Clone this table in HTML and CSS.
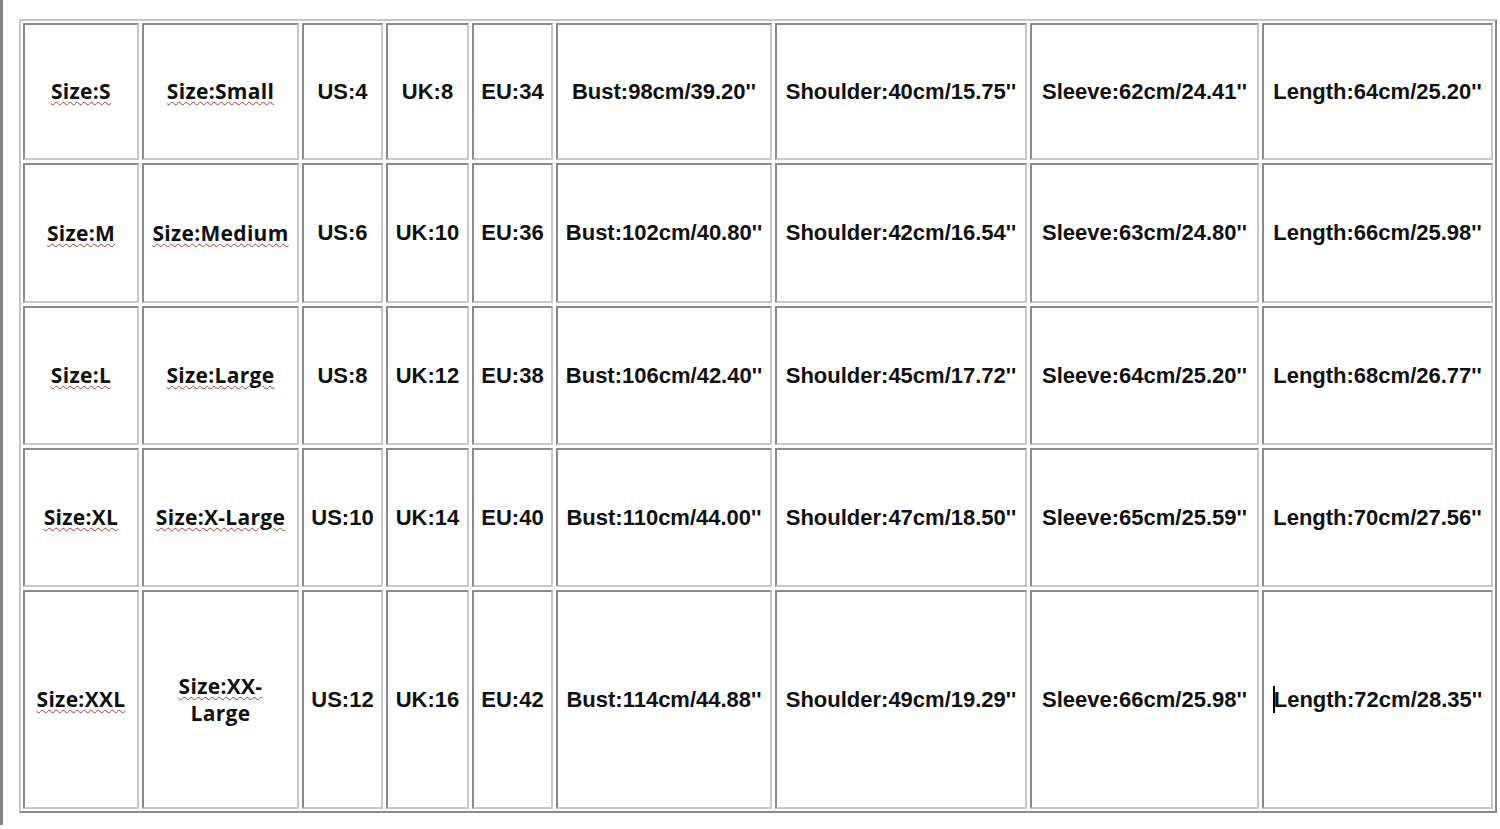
FILE: index.html
```html
<!DOCTYPE html>
<html>
<head>
<meta charset="utf-8">
<link rel="stylesheet" href="styles.css">
</head>
<body>
<div class="page">
  <div class="chart">
    <div class="cell"><span class="sz">Size:S</span></div>
    <div class="cell"><span class="sz">Size:Small</span></div>
    <div class="cell">US:4</div>
    <div class="cell">UK:8</div>
    <div class="cell">EU:34</div>
    <div class="cell">Bust:98cm/39.20''</div>
    <div class="cell">Shoulder:40cm/15.75''</div>
    <div class="cell">Sleeve:62cm/24.41''</div>
    <div class="cell">Length:64cm/25.20''</div>

    <div class="cell"><span class="sz">Size:M</span></div>
    <div class="cell"><span class="sz">Size:Medium</span></div>
    <div class="cell">US:6</div>
    <div class="cell">UK:10</div>
    <div class="cell">EU:36</div>
    <div class="cell">Bust:102cm/40.80''</div>
    <div class="cell">Shoulder:42cm/16.54''</div>
    <div class="cell">Sleeve:63cm/24.80''</div>
    <div class="cell">Length:66cm/25.98''</div>

    <div class="cell"><span class="sz">Size:L</span></div>
    <div class="cell"><span class="sz">Size:Large</span></div>
    <div class="cell">US:8</div>
    <div class="cell">UK:12</div>
    <div class="cell">EU:38</div>
    <div class="cell">Bust:106cm/42.40''</div>
    <div class="cell">Shoulder:45cm/17.72''</div>
    <div class="cell">Sleeve:64cm/25.20''</div>
    <div class="cell">Length:68cm/26.77''</div>

    <div class="cell"><span class="sz">Size:XL</span></div>
    <div class="cell"><span class="sz">Size:X-Large</span></div>
    <div class="cell">US:10</div>
    <div class="cell">UK:14</div>
    <div class="cell">EU:40</div>
    <div class="cell">Bust:110cm/44.00''</div>
    <div class="cell">Shoulder:47cm/18.50''</div>
    <div class="cell">Sleeve:65cm/25.59''</div>
    <div class="cell">Length:70cm/27.56''</div>

    <div class="cell"><span class="sz">Size:XXL</span></div>
    <div class="cell"><span class="sz2"><span class="sq">Size:XX-</span><br>Large</span></div>
    <div class="cell">US:12</div>
    <div class="cell">UK:16</div>
    <div class="cell">EU:42</div>
    <div class="cell">Bust:114cm/44.88''</div>
    <div class="cell">Shoulder:49cm/19.29''</div>
    <div class="cell">Sleeve:66cm/25.98''</div>
    <div class="cell"><span class="caret"></span>Length:72cm/28.35''</div>
  </div>
</div>
</body>
</html>
```
FILE: styles.css
```css
html, body {
  margin: 0;
  padding: 0;
  background: #ffffff;
}

.page {
  height: 825px;
  border-left: 3px solid #858585;
  padding: 19px 0 0 16px;
  box-sizing: border-box;
}

.chart {
  display: grid;
  width: max-content;
  grid-template-columns: 116px 157px 81px 83px 81px 216px 252px 229px 231px;
  grid-template-rows: 137px 140px 139px 139px 219px;
  gap: 3px;
  padding: 2px;
  border: 2px solid;
  border-color: #c4c4c4 #8a8a8a #8a8a8a #c4c4c4;
}

.cell {
  display: flex;
  align-items: center;
  justify-content: center;
  text-align: center;
  box-sizing: border-box;
  border: 2px solid;
  border-color: #8a8a8a #c8c8c8 #c8c8c8 #8a8a8a;
  font-family: "Liberation Sans", Arial, sans-serif;
  font-weight: bold;
  font-size: 22px;
  color: #111111;
  white-space: nowrap;
}

.sz,
.sz2 {
  font-family: "Open Sans", "DejaVu Sans", sans-serif;
  font-weight: 700;
  font-size: 21px;
  letter-spacing: 0.3px;
  line-height: 27px;
  color: #111111;
}

.sz,
.sq {
  text-decoration: underline wavy #a83a3a;
  text-decoration-thickness: 1.3px;
  text-underline-offset: 2px;
}

.caret {
  display: inline-block;
  width: 2px;
  height: 27px;
  margin-right: -1px;
  background: #000000;
  vertical-align: middle;
}
```
